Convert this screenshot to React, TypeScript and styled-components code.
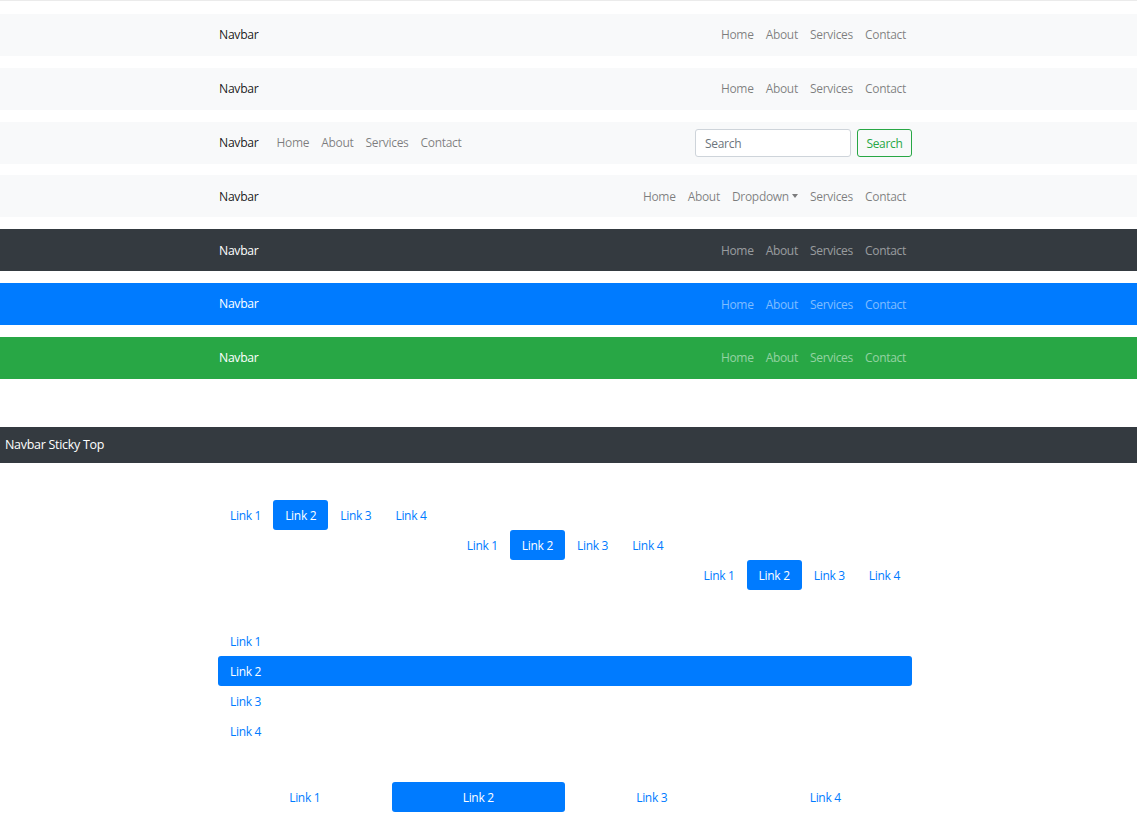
import React from "react";
import styled, { createGlobalStyle } from "styled-components";

const Global = createGlobalStyle`
  html, body { margin: 0; padding: 0; background: #fff; }
  body {
    font-family: "Open Sans", "Noto Sans", sans-serif;
    font-size: 12px;
    line-height: 1.5;
    letter-spacing: -0.3px;
    color: #212529;
    border-top: 1px solid #ebebeb;
  }
  * { box-sizing: border-box; }
`;

type Variant = "light" | "dark" | "primary" | "success";

const bgs: Record<Variant, string> = {
  light: "#f8f9fa",
  dark: "#343a40",
  primary: "#007bff",
  success: "#28a745",
};

const Page = styled.div`
  padding-top: 13px;
  padding-bottom: 12px;
`;

const Bar = styled.nav<{ $v: Variant }>`
  background: ${(p) => bgs[p.$v]};
  height: 42px;
  margin-bottom: 11.83px;
  padding-top: 1px;
  display: flex;
  align-items: center;
`;

const Container = styled.div`
  width: 694px;
  margin-left: calc(50% - 350.5px);
  display: flex;
  align-items: center;
`;

const Brand = styled.span<{ $dark: boolean }>`
  font-size: 12.2px;
  color: ${(p) => (p.$dark ? "#fff" : "rgba(0,0,0,.9)")};
  margin-right: 12px;
  padding-left: 1px;
  white-space: nowrap;
`;

const Links = styled.div<{ $right?: boolean }>`
  display: flex;
  align-items: center;
  margin-left: ${(p) => (p.$right ? "auto" : "0")};
`;

const NavLink = styled.span<{ $dark: boolean }>`
  padding: 0 6px;
  color: ${(p) => (p.$dark ? "rgba(255,255,255,.5)" : "rgba(0,0,0,.5)")};
  white-space: nowrap;
  display: inline-flex;
  align-items: center;
`;

const Caret = styled.span`
  display: inline-block;
  margin-left: 3px;
  width: 0;
  height: 0;
  border-top: 4px solid rgba(0,0,0,.5);
  border-left: 3.5px solid transparent;
  border-right: 3.5px solid transparent;
  position: relative;
  top: -1px;
`;

const Form = styled.form`
  margin-left: auto;
  display: flex;
  align-items: center;
  gap: 6px;
`;

const Input = styled.input`
  width: 156px;
  height: 28px;
  border: 1px solid #ced4da;
  border-radius: 3px;
  padding: 0 9px;
  font-family: inherit;
  font-size: 12px;
  letter-spacing: -0.3px;
  color: #495057;
  background: #fff;
  &::placeholder { color: #6c757d; }
`;

const OutlineBtn = styled.button`
  height: 28px;
  width: 55px;
  border: 1px solid #28a745;
  border-radius: 3px;
  background: transparent;
  color: #28a745;
  font-family: inherit;
  font-size: 12px;
  letter-spacing: -0.3px;
  padding: 0;
`;

const Sticky = styled.div`
  margin-top: 48px;
  background: #343a40;
  height: 36px;
  display: flex;
  align-items: center;
  padding-left: 5px;
  color: #fff;
  font-size: 12.5px;
`;

const PillRow = styled.div<{ $justify: string; $top?: number }>`
  width: 694px;
  margin-left: calc(50% - 350.5px);
  margin-top: ${(p) => p.$top ?? 0}px;
  display: flex;
  justify-content: ${(p) => p.$justify};
`;

const PillStack = styled.div<{ $gapTop: number }>`
  margin-top: ${(p) => p.$gapTop}px;
`;

const Pill = styled.span<{ $active?: boolean; $fill?: boolean; $block?: boolean }>`
  display: ${(p) => (p.$block ? "flex" : "inline-flex")};
  align-items: center;
  justify-content: ${(p) => (p.$fill ? "center" : "flex-start")};
  flex: ${(p) => (p.$fill ? "1 1 0" : "0 0 auto")};
  height: 30px;
  padding: 2px 12px 0;
  border-radius: 3px;
  color: ${(p) => (p.$active ? "#fff" : "#007bff")};
  background: ${(p) => (p.$active ? "#007bff" : "transparent")};
  white-space: nowrap;
`;

const Column = styled.div`
  width: 694px;
  margin-left: calc(50% - 350.5px);
  margin-top: 36px;
  display: flex;
  flex-direction: column;
`;

const basic = ["Home", "About", "Services", "Contact"];
const pills = ["Link 1", "Link 2", "Link 3", "Link 4"];

function SimpleBar({ v }: { v: Variant }) {
  const dark = v !== "light";
  return (
    <Bar $v={v}>
      <Container>
        <Brand $dark={dark}>Navbar</Brand>
        <Links $right>
          {basic.map((l) => (
            <NavLink key={l} $dark={dark}>{l}</NavLink>
          ))}
        </Links>
      </Container>
    </Bar>
  );
}

function PillNav({ justify }: { justify: string }) {
  return (
    <PillRow $justify={justify}>
      {pills.map((p) => (
        <Pill key={p} $active={p === "Link 2"}>{p}</Pill>
      ))}
    </PillRow>
  );
}

export default function App() {
  return (
    <>
      <Global />
      <Page>
        <SimpleBar v="light" />
        <SimpleBar v="light" />
        <Bar $v="light">
          <Container>
            <Brand $dark={false}>Navbar</Brand>
            <Links>
              {basic.map((l) => (
                <NavLink key={l} $dark={false}>{l}</NavLink>
              ))}
            </Links>
            <Form onSubmit={(e) => e.preventDefault()}>
              <Input placeholder="Search" />
              <OutlineBtn type="button">Search</OutlineBtn>
            </Form>
          </Container>
        </Bar>
        <Bar $v="light">
          <Container>
            <Brand $dark={false}>Navbar</Brand>
            <Links $right>
              <NavLink $dark={false}>Home</NavLink>
              <NavLink $dark={false}>About</NavLink>
              <NavLink $dark={false}>Dropdown<Caret /></NavLink>
              <NavLink $dark={false}>Services</NavLink>
              <NavLink $dark={false}>Contact</NavLink>
            </Links>
          </Container>
        </Bar>
        <SimpleBar v="dark" />
        <SimpleBar v="primary" />
        <SimpleBar v="success" />
        <Sticky>Navbar Sticky Top</Sticky>
        <PillStack $gapTop={37}>
          <PillNav justify="flex-start" />
          <PillNav justify="center" />
          <PillNav justify="flex-end" />
        </PillStack>
        <Column>
          {pills.map((p) => (
            <Pill key={p} $block $active={p === "Link 2"}>{p}</Pill>
          ))}
        </Column>
        <PillRow $justify="stretch" $top={36}>
          {pills.map((p) => (
            <Pill key={p} $fill $active={p === "Link 2"}>{p}</Pill>
          ))}
        </PillRow>
      </Page>
    </>
  );
}
